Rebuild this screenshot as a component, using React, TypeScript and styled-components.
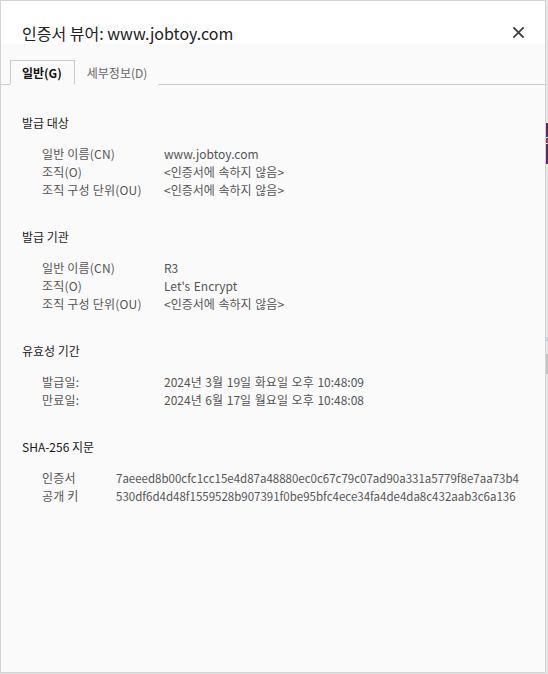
import React from 'react';
import styled, { createGlobalStyle } from 'styled-components';

const GlobalStyle = createGlobalStyle`
  html, body {
    margin: 0;
    padding: 0;
    background: #e6e6e6;
  }
  body {
    font-family: "Noto Sans CJK KR", "Noto Sans", sans-serif;
  }
`;

const Page = styled.div`
  display: flex;
  width: 548px;
  height: 674px;
  overflow: hidden;
`;

const Dialog = styled.div`
  width: 546px;
  height: 673px;
  box-sizing: border-box;
  border: 1px solid #d3d3d3;
  background: #fafafa;
  display: flex;
  flex-direction: column;
  flex-shrink: 0;
`;

// page behind the dialog, only a sliver shows on the right
const Backdrop = styled.div`
  flex: 1;
  display: flex;
  flex-direction: column;
  padding-top: 123px;
  gap: 1px;
`;

const BackdropMark = styled.div<{ $h: number; $color: string; $mt?: number }>`
  height: ${(p) => p.$h}px;
  background: ${(p) => p.$color};
  margin-top: ${(p) => p.$mt || 0}px;
`;

const Header = styled.div`
  height: 43px;
  background: #fff;
  display: flex;
  align-items: flex-start;
  justify-content: space-between;
  padding: 21px 20px 0 21px;
  box-sizing: border-box;
`;

const Title = styled.h1`
  margin: 0;
  font-size: 16px;
  line-height: 22px;
  font-weight: 400;
  color: #202020;
`;

const CloseButton = styled.button`
  border: none;
  background: transparent;
  padding: 0;
  margin-top: 3px;
  width: 14px;
  height: 14px;
  display: flex;
  align-items: center;
  justify-content: center;
  cursor: pointer;
`;

const TabStrip = styled.div`
  display: flex;
  align-items: flex-end;
  padding: 15px 0 0 9px;
  border-bottom: 1px solid #cccccc;
  height: 41px;
  box-sizing: border-box;
`;

const Tab = styled.div<{ $active?: boolean }>`
  height: 25px;
  box-sizing: border-box;
  padding: 0 ${(p) => (p.$active ? 12 : 10)}px 0 11px;
  display: flex;
  align-items: center;
  font-size: 12px;
  margin-bottom: -1px;
  color: ${(p) => (p.$active ? '#111' : '#666')};
  font-weight: ${(p) => (p.$active ? 700 : 400)};
  border: 1px solid ${(p) => (p.$active ? '#cccccc' : 'transparent')};
  border-bottom-color: ${(p) => (p.$active ? '#fafafa' : 'transparent')};
  background: #fafafa;
`;

const Content = styled.div`
  padding: 29px 21px 0 21px;
  display: flex;
  flex-direction: column;
  gap: 29px;
`;

const Section = styled.section`
  display: flex;
  flex-direction: column;
  gap: 13px;
`;

const Heading = styled.h2`
  margin: 0;
  font-size: 12px;
  line-height: 18px;
  font-weight: 400;
  color: #1a1a1a;
`;

const Rows = styled.div<{ $labelWidth: number }>`
  display: grid;
  grid-template-columns: ${(p) => p.$labelWidth}px auto;
  padding-left: 20px;
  font-size: 12px;
  line-height: 18px;
  color: #555;
  white-space: nowrap;
`;

const Label = styled.span`
  letter-spacing: 0.2px;
`;

const Value = styled.span<{ $hash?: boolean }>`
  font-size: ${(p) => (p.$hash ? '11.5px' : '12px')};
  word-spacing: ${(p) => (p.$hash ? '0' : '1px')};
`;

type Field = [string, string];

const sections: { title: string; labelWidth: number; fields: Field[]; hash?: boolean }[] = [
  {
    title: '발급 대상',
    labelWidth: 122,
    fields: [
      ['일반 이름(CN)', 'www.jobtoy.com'],
      ['조직(O)', '<인증서에 속하지 않음>'],
      ['조직 구성 단위(OU)', '<인증서에 속하지 않음>'],
    ],
  },
  {
    title: '발급 기관',
    labelWidth: 122,
    fields: [
      ['일반 이름(CN)', 'R3'],
      ['조직(O)', "Let's Encrypt"],
      ['조직 구성 단위(OU)', '<인증서에 속하지 않음>'],
    ],
  },
  {
    title: '유효성 기간',
    labelWidth: 122,
    fields: [
      ['발급일:', '2024년 3월 19일 화요일 오후 10:48:09'],
      ['만료일:', '2024년 6월 17일 월요일 오후 10:48:08'],
    ],
  },
  {
    title: 'SHA-256 지문',
    labelWidth: 74,
    hash: true,
    fields: [
      ['인증서', '7aeeed8b00cfc1cc15e4d87a48880ec0c67c79c07ad90a331a5779f8e7aa73b4'],
      ['공개 키', '530df6d4d48f1559528b907391f0be95bfc4ece34fa4de4da8c432aab3c6a136'],
    ],
  },
];

export default function App() {
  return (
    <>
      <GlobalStyle />
      <Page>
        <Dialog>
          <Header>
            <Title>인증서 뷰어: www.jobtoy.com</Title>
            <CloseButton aria-label="닫기">
              <svg width="11" height="11" viewBox="0 0 11 11">
                <path d="M1 1L10 10M10 1L1 10" stroke="#444" strokeWidth="1.8" strokeLinecap="square" />
              </svg>
            </CloseButton>
          </Header>
          <TabStrip>
            <Tab $active>일반(G)</Tab>
            <Tab>세부정보(D)</Tab>
          </TabStrip>
          <Content>
            {sections.map((s) => (
              <Section key={s.title}>
                <Heading>{s.title}</Heading>
                <Rows $labelWidth={s.labelWidth}>
                  {s.fields.map(([label, value]) => (
                    <React.Fragment key={label}>
                      <Label>{label}</Label>
                      <Value $hash={s.hash}>{value}</Value>
                    </React.Fragment>
                  ))}
                </Rows>
              </Section>
            ))}
          </Content>
        </Dialog>
        <Backdrop>
          <BackdropMark $h={14} $color="#6a1b8a" />
          <BackdropMark $h={5} $color="#b0207a" />
          <BackdropMark $h={20} $color="#6a1b8a" />
          <BackdropMark $h={4} $color="#c9d3e6" $mt={172} />
          <BackdropMark $h={20} $color="#c4c4c4" $mt={12} />
        </Backdrop>
      </Page>
    </>
  );
}
